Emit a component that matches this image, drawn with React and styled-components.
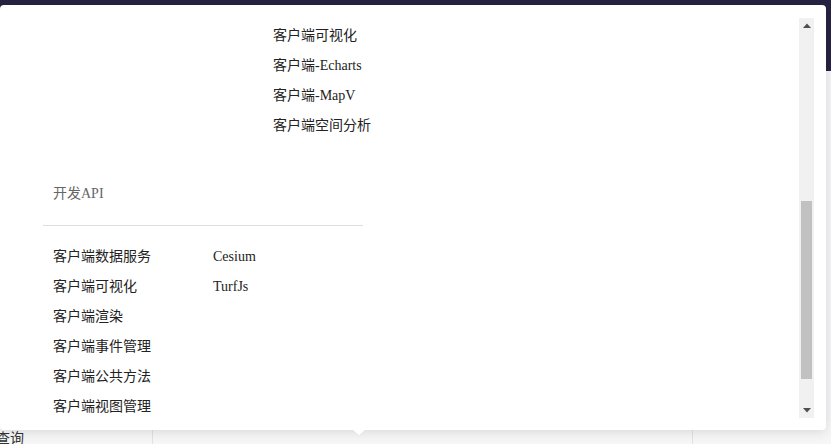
import React, { useLayoutEffect, useRef } from "react";
import styled, { createGlobalStyle } from "styled-components";

const Global = createGlobalStyle`
  html, body { margin: 0; padding: 0; }
  body {
    font-family: "Liberation Serif", "Noto Sans CJK SC", serif;
    background: #f5f5f7;
    width: 831px;
    height: 444px;
    overflow: hidden;
  }
`;

const Page = styled.div`
  position: relative;
  width: 831px;
  height: 444px;
  overflow: hidden;
  background: #f5f5f7;
`;

const Header = styled.header`
  height: 71px;
  background: #252342;
`;

const Main = styled.main`
  padding-top: 351px;
`;

const TableRow = styled.div`
  display: grid;
  grid-template-columns: 153px 540px 1fr;
  height: 30px;
  background: #f6f6f7;
`;

const Cell = styled.div`
  border-right: 1px solid #e2e2e4;
  font-family: "Noto Sans CJK SC", sans-serif;
  font-size: 14px;
  line-height: 30px;
  color: #333;
  overflow: hidden;
  white-space: nowrap;
`;

const CellText = styled.span`
  display: inline-block;
  margin-left: -4px;
`;

const Popover = styled.div`
  position: absolute;
  top: 5px;
  left: 0;
  width: 826px;
  height: 425px;
  box-sizing: border-box;
  padding: 13px 12px 12px 0;
  display: flex;
  background: #fff;
  border-radius: 4px;
  box-shadow: 0 2px 12px rgba(0, 0, 0, 0.12);
  &::after {
    content: "";
    position: absolute;
    left: 353px;
    bottom: -5px;
    width: 0;
    height: 0;
    border-left: 6px solid transparent;
    border-right: 6px solid transparent;
    border-top: 5px solid #fff;
  }
`;

const Scroller = styled.div`
  flex: 1;
  height: 400px;
  overflow: hidden;
`;

const ScrollBar = styled.div`
  width: 15px;
  height: 400px;
  flex: none;
  display: flex;
  flex-direction: column;
  background: #f1f1f1;
`;

const ArrowButton = styled.div`
  height: 15px;
  flex: none;
  display: flex;
  align-items: center;
  justify-content: center;
`;

const Track = styled.div`
  flex: 1;
  display: flex;
  flex-direction: column;
`;

const Thumb = styled.div`
  margin: 0 2px;
  background: #c1c1c1;
  flex: none;
`;

const Content = styled.div`
  padding: 6px 0 50px 43px;
`;

const Section = styled.section`
  width: 320px;
  margin-bottom: ${(p) => (p.$last ? "0" : "38px")};
`;

const Title = styled.div`
  padding-left: 10px;
  height: 30px;
  line-height: 30px;
  font-size: 14px;
  color: #666;
  margin-bottom: 16px;
`;

const Divider = styled.div`
  height: 1px;
  background: #dedede;
  margin-bottom: 16px;
`;

const Columns = styled.div`
  display: flex;
  padding-left: 10px;
`;

const Column = styled.ul`
  list-style: none;
  margin: 0;
  padding: 0;
  width: ${(p) => p.$width}px;
  flex: none;
`;

const Item = styled.li`
  height: 30px;
  line-height: 30px;
  font-size: 14px;
  color: #222;
  white-space: nowrap;
`;

const sections = [
  {
    title: "快速入门",
    width: 160,
    columns: [
      ["客户端入门", "客户端示例", "客户端下载"],
      ["服务端入门", "服务端示例"],
    ],
  },
  {
    title: "客户端开发",
    width: 110,
    columns: [
      ["客户端地图", "客户端图层", "客户端控件", "客户端标注"],
      ["客户端绘制", "客户端测量", "客户端查询"],
      [
        "客户端数据服务",
        "客户端专题图",
        "客户端聚合",
        "客户端热力图",
        "客户端可视化",
        "客户端-Echarts",
        "客户端-MapV",
        "客户端空间分析",
      ],
    ],
  },
  {
    title: "开发API",
    width: 160,
    columns: [
      [
        "客户端数据服务",
        "客户端可视化",
        "客户端渲染",
        "客户端事件管理",
        "客户端公共方法",
        "客户端视图管理",
      ],
      ["Cesium", "TurfJs"],
    ],
  },
];

const SCROLL_TOP = 377;
const VIEW = 400;
const TOTAL = 831;
const TRACK = VIEW - 30;

export default function App() {
  const ref = useRef(null);
  useLayoutEffect(() => {
    if (ref.current) ref.current.scrollTop = SCROLL_TOP;
  }, []);
  const thumbH = Math.round((TRACK * VIEW) / TOTAL);
  const thumbTop = Math.round(((TRACK - thumbH) * SCROLL_TOP) / (TOTAL - VIEW));
  return (
    <Page>
      <Global />
      <Header />
      <Main>
        <TableRow>
          <Cell>
            <CellText>查询</CellText>
          </Cell>
          <Cell />
          <div />
        </TableRow>
      </Main>
      <Popover>
        <Scroller ref={ref}>
          <Content>
            {sections.map((s, i) => (
              <Section key={s.title} $last={i === sections.length - 1}>
                <Title>{s.title}</Title>
                <Divider />
                <Columns>
                  {s.columns.map((col, j) => (
                    <Column key={j} $width={s.width}>
                      {col.map((it) => (
                        <Item key={it}>{it}</Item>
                      ))}
                    </Column>
                  ))}
                </Columns>
              </Section>
            ))}
          </Content>
        </Scroller>
        <ScrollBar>
          <ArrowButton>
            <svg width="8" height="5" viewBox="0 0 8 5">
              <polygon points="0,5 8,5 4,0.5" fill="#505050" />
            </svg>
          </ArrowButton>
          <Track>
            <Thumb style={{ marginTop: thumbTop, height: thumbH }} />
          </Track>
          <ArrowButton>
            <svg width="8" height="5" viewBox="0 0 8 5">
              <polygon points="0,0 8,0 4,4.5" fill="#505050" />
            </svg>
          </ArrowButton>
        </ScrollBar>
      </Popover>
    </Page>
  );
}
